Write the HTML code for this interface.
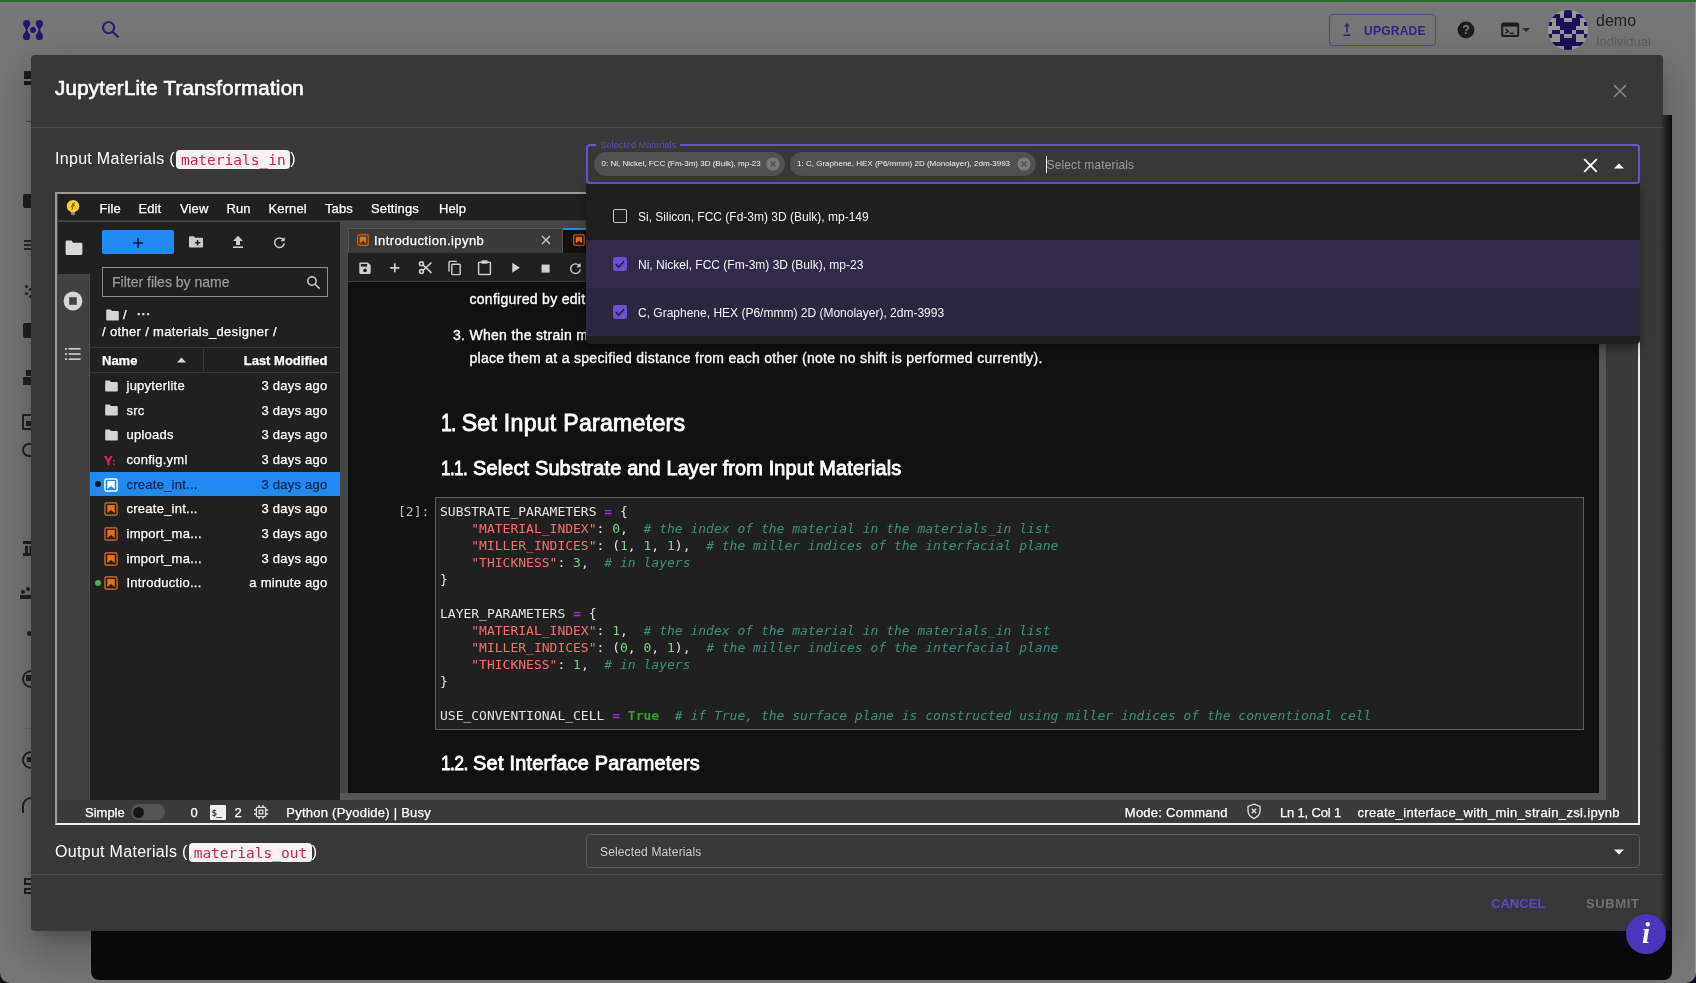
<!DOCTYPE html>
<html lang="en">
<head>
<meta charset="utf-8">
<title>JupyterLite Transformation</title>
<style>
*{box-sizing:border-box;margin:0;padding:0}
html,body{width:1696px;height:983px;overflow:hidden}
body{position:relative;background:#777777;font-family:"Liberation Sans",Arial,sans-serif;color:#fff;-webkit-font-smoothing:antialiased}
.abs{position:absolute}
svg{display:block}
/* ---------- page behind backdrop ---------- */
#greenline{left:0;top:0;width:1696px;height:2px;background:#2c6a2c}
#backpanel{left:91px;top:115px;width:1581px;height:865px;background:#0b0b0b;border-radius:0 0 8px 8px}
.bgico{position:absolute;color:#1b1b2b}
/* ---------- modal ---------- */
#modal{will-change:transform;left:31px;top:55px;width:1632px;height:876px;background:#383838;border-radius:4px;box-shadow:0 11px 15px -7px rgba(0,0,0,.2),0 24px 38px 3px rgba(0,0,0,.14),0 9px 46px 8px rgba(0,0,0,.12)}
#title{left:24px;top:21px;font-size:20.5px;font-weight:400;letter-spacing:.24px;-webkit-text-stroke:.65px #fff;line-height:24px;white-space:nowrap}
.hr{position:absolute;left:0;width:1632px;height:1px;background:#4e4e4e}
.rowlabel{position:absolute;left:24px;font-size:16px;line-height:20px;white-space:nowrap;color:#fff;letter-spacing:.3px}
.rowlabel code{font-family:"DejaVu Sans Mono","Liberation Mono",monospace;font-size:14.5px;letter-spacing:0;color:#c7254e;background:#f9f2f4;border-radius:4px;padding:1.5px 4.6px;margin-left:1.5px}

/* ---------- jupyterlite ---------- */
#jl{position:absolute;left:24px;top:137px;width:1585px;height:633px;border:2px solid;border-color:#9a9a9a #eeeeee #eeeeee #9a9a9a;background:#454545;overflow:hidden;font-size:13px;color:#fff}
#jli{position:absolute;left:1px;top:0;width:1580px;height:629px}
#jl .t{position:absolute;white-space:nowrap;line-height:16px;-webkit-text-stroke:.25px currentColor}
#jmenu{left:0;top:0;width:1580px;height:27px;background:#202020;border-bottom:1px solid #3c3c3c}
#jmenu .t{top:6.8px;font-size:13px;letter-spacing:.12px}
#jside{left:0;top:28px;width:32px;height:578px;background:#414141;border-right:1px solid #4c4c4c}
#jsideact{left:0;top:28px;width:32px;height:52px;background:#202020}
#jfb{left:32px;top:28px;width:250px;height:578px;background:#202020}
#jfb .row{position:absolute;left:0;width:250px;height:24.67px}
#jfb .row .t{top:5px;letter-spacing:.25px}
#jfb .row .n{left:36.5px}
#jfb .row .m{right:12.5px}
#jfb .ic{position:absolute;left:14.5px;top:6.2px}
.nbi{stroke:#e5700c;fill:#e5700c}

#jtabs .t{font-size:13px}
#jtool{left:290px;top:59.4px;width:1251px;height:28.3px;background:#202020;border-bottom:1px solid #3c3c3c}
#jtool svg{position:absolute}
#jnb{left:290px;top:88px;width:1251px;height:511px;background:#111111;overflow:hidden}
#jnb .md{position:absolute;white-space:nowrap;font-size:14px;line-height:22px;color:#fff;letter-spacing:.31px;-webkit-text-stroke:.35px #fff}
#jnb h2,#jnb h3{position:absolute;white-space:nowrap;font-weight:400;color:#fff;letter-spacing:0;-webkit-text-stroke:.85px #fff}
#jnb h2{font-size:23.1px;line-height:30px}
#jnb h3{font-size:19.9px;line-height:26px}
#cell{left:87.3px;top:214.6px;width:1149px;height:233.4px;background:#202020;border:1px solid #606060}
pre.code{position:absolute;left:3.7px;top:5.9px;font-family:"DejaVu Sans Mono","Liberation Mono",monospace;font-size:13px;line-height:17px;color:#e4e4e4;letter-spacing:0}
pre.code .s{color:#f2706e}
pre.code .o{color:#a826f7;font-weight:700}
pre.code .n{color:#7dd08a}
pre.code .c{color:#3c8f7f;font-style:italic}
pre.code .k{color:#2fa12f;font-weight:700}
#jstatus{left:0;top:606px;width:1580px;height:23px;background:#3a3a3a}
#jstatus .t{top:4.5px;font-size:13px}

/* ---------- MUI bits ---------- */
#ac{left:555px;top:88.6px;width:1054px;height:40.2px;border:2px solid #6a53c9;border-radius:4px;background:#383838}
#aclabel{left:565.4px;top:84.1px;padding:0 4px;background:#383838;font-size:9px;line-height:12px;color:#5f4eb4;white-space:nowrap;letter-spacing:.1px}
.chip{position:absolute;top:96.5px;height:24.5px;border-radius:12.25px;background:#515151;box-shadow:0 0 0 .5px rgba(0,0,0,.1)}
.chip span{position:absolute;left:7.6px;top:6.2px;font-size:8px;line-height:12px;color:#f2f2f2;white-space:nowrap}
.chip svg{position:absolute;top:5.5px}
#pop{left:555px;top:128.6px;width:1054px;height:160.4px;background:#1f1f1f;border-radius:0 0 4px 4px;box-shadow:0 5px 5px -3px rgba(0,0,0,.2),0 8px 10px 1px rgba(0,0,0,.14),0 3px 14px 2px rgba(0,0,0,.12)}
#pop .it{position:absolute;left:0;width:1054px;height:48px}
#pop .it span{position:absolute;left:52px;top:16.8px;font-size:12px;line-height:16px;color:#f4f4f4;white-space:nowrap}
#pop .cb{position:absolute;left:27px;top:17.4px;width:14px;height:14px;border-radius:2px}
#outsel{left:555px;top:779px;width:1054px;height:34px;border:1px solid #5c5c5c;border-radius:4px}
.btn{position:absolute;top:840.8px;font-size:13px;font-weight:700;line-height:16px;letter-spacing:.3px;white-space:nowrap}
</style>
</head>
<body>
<div id="greenline" class="abs"></div>
<div id="topbar" class="abs" style="left:0;top:0;width:1696px;height:55px;will-change:transform">
  <svg class="abs" style="left:22px;top:19px" width="22" height="22" viewBox="0 0 22 22" fill="#20196e"><circle cx="4.6" cy="4.6" r="3.6"/><circle cx="17.4" cy="4.6" r="3.6"/><circle cx="4.6" cy="17.4" r="3.6"/><circle cx="17.4" cy="17.4" r="3.6"/><circle cx="11" cy="11" r="2.9"/><path d="M2.2 7 L7 7 L5.3 11 L7 15 L2.2 15 L3.9 11 Z"/><path d="M15 7 L19.8 7 L18.1 11 L19.8 15 L15 15 L16.7 11 Z"/></svg>
  <svg class="abs" style="left:100px;top:19px" width="22" height="22" viewBox="0 0 22 22" fill="none" stroke="#262072" stroke-width="2.1"><circle cx="8.6" cy="8.6" r="5.6"/><path d="M12.8 12.8 L18.6 18.6" stroke-linecap="butt"/></svg>
  <div class="abs" style="left:1329px;top:14px;width:106.5px;height:32px;border:1px solid #4f4a93;border-radius:4px"></div>
  <svg class="abs" style="left:1340px;top:22px" width="14" height="16" viewBox="0 0 14 16" fill="#2c2680"><path d="M7 1 L10 4.4 H7.8 V10.6 H6.2 V4.4 H4 Z"/><rect x="3.6" y="12.4" width="6.8" height="1.6"/></svg>
  <div class="abs" style="left:1364px;top:23px;font-size:12px;font-weight:700;letter-spacing:.25px;color:#2c2680;line-height:16px;white-space:nowrap" id="upg">UPGRADE</div>
  <svg class="abs" style="left:1456px;top:20px" width="20" height="20" viewBox="0 0 20 20"><circle cx="10" cy="10" r="8.4" fill="#1c1c1c"/><text x="10" y="14.3" text-anchor="middle" font-family="Liberation Sans, Arial, sans-serif" font-weight="700" font-size="12.5" fill="#7d7d7d">?</text></svg>
  <svg class="abs" style="left:1501px;top:22px" width="32" height="16" viewBox="0 0 32 16"><rect x="1.2" y="1.6" width="16" height="12.4" rx="1.6" fill="none" stroke="#1d1d1d" stroke-width="2"/><rect x="1.2" y="1.6" width="16" height="3" fill="#1d1d1d"/><path d="M4.6 7 L7.2 9.2 L4.6 11.4" fill="none" stroke="#1d1d1d" stroke-width="1.5"/><rect x="8.6" y="10.6" width="4.6" height="1.4" fill="#1d1d1d"/><path d="M21.2 6 H29 L25.1 10 Z" fill="#2a2a2a"/></svg>
  <svg class="abs" style="left:1548px;top:10px" width="40" height="40" viewBox="0 0 40 40"><defs><clipPath id="avc"><circle cx="20" cy="20" r="20"/></clipPath></defs><g clip-path="url(#avc)"><rect width="40" height="40" fill="#9a9a98"/><g fill="#1d1058"><rect x="16" y="0" width="8" height="4"/><rect x="4" y="4" width="8" height="4"/><rect x="16" y="4" width="8" height="4"/><rect x="28" y="4" width="8" height="4"/><rect x="8" y="8" width="8" height="4"/><rect x="24" y="8" width="8" height="4"/><rect x="0" y="12" width="4" height="4"/><rect x="8" y="12" width="24" height="4"/><rect x="36" y="12" width="4" height="4"/><rect x="12" y="16" width="16" height="4"/><rect x="4" y="20" width="8" height="4"/><rect x="16" y="20" width="8" height="4"/><rect x="28" y="20" width="8" height="4"/><rect x="0" y="24" width="4" height="4"/><rect x="12" y="24" width="4" height="4"/><rect x="24" y="24" width="4" height="4"/><rect x="36" y="24" width="4" height="4"/><rect x="12" y="28" width="16" height="4"/><rect x="4" y="32" width="32" height="4"/><rect x="16" y="36" width="8" height="4"/></g></g></svg>
  <div class="abs" id="demo" style="left:1596px;top:11px;font-size:16px;line-height:20px;color:#202020;white-space:nowrap">demo</div>
  <div class="abs" id="indiv" style="left:1596px;top:34px;font-size:13px;line-height:16px;color:#5e5e5e;white-space:nowrap">Individual</div>
</div>
<div id="pageside">
  <div class="abs" style="left:23.6px;top:70.8px;width:9px;height:8px;background:#1c1c1e"></div>
  <div class="abs" style="left:23.6px;top:81.2px;width:9px;height:4px;background:#1c1c1e"></div>
  <div class="abs" style="left:26px;top:120.5px;width:6px;height:1.5px;background:#4a4a4a"></div>
  <div class="abs" style="left:23px;top:194px;width:9px;height:14px;border-radius:2px 0 0 2px;background:#202022"></div>
  <div class="abs" style="left:24px;top:240px;width:8px;height:2px;background:#2a2a2c;box-shadow:0 4px 0 #2a2a2c,0 8px 0 #2a2a2c"></div>
  <div class="abs" style="left:25px;top:285px;width:3px;height:3px;border-radius:2px;background:#26262a;box-shadow:4px 3px 0 #26262a,0 7px 0 #26262a,4px 10px 0 #26262a"></div>
  <div class="abs" style="left:23px;top:323px;width:9px;height:15px;border-radius:2px 0 0 2px;background:#202022"></div>
  <div class="abs" style="left:26px;top:370px;width:6px;height:6px;background:#222226"></div>
  <div class="abs" style="left:23px;top:377px;width:9px;height:8px;background:#222226"></div>
  <div class="abs" style="left:21.5px;top:414px;width:11px;height:16px;border:2px solid #222226;border-right:none;border-radius:2px 0 0 2px"></div>
  <div class="abs" style="left:26px;top:421px;width:6px;height:5px;background:#222226"></div>
  <div class="abs" style="left:21.5px;top:443px;width:11px;height:14px;border:2px solid #222226;border-right:none;border-radius:7px 0 0 7px"></div>
  <div class="abs" style="left:23px;top:541px;width:9px;height:3px;background:#222226;box-shadow:0 12px 0 #222226"></div>
  <div class="abs" style="left:25px;top:546px;width:2.5px;height:8px;background:#222226;box-shadow:4.5px 0 0 #222226"></div>
  <div class="abs" style="left:21px;top:590px;width:4px;height:4px;border-radius:2px;background:#222226;box-shadow:5px -3px 0 #222226"></div>
  <div class="abs" style="left:20px;top:595px;width:12px;height:4px;background:#222226"></div>
  <div class="abs" style="left:27px;top:631px;width:5px;height:5px;border-radius:3px;background:#222226"></div>
  <div class="abs" style="left:22px;top:670px;width:18px;height:18px;border:2.5px solid #222226;border-radius:9px"></div>
  <div class="abs" style="left:26px;top:675px;width:6px;height:6px;background:#222226"></div>
  <div class="abs" style="left:24px;top:728px;width:8px;height:1px;background:#6a6a6a"></div>
  <div class="abs" style="left:22px;top:751px;width:18px;height:18px;border:2.5px solid #222226;border-radius:9px"></div>
  <div class="abs" style="left:27px;top:757px;width:5px;height:5px;background:#222226"></div>
  <div class="abs" style="left:22px;top:797px;width:18px;height:16px;border:2.5px solid #222226;border-bottom:none;border-radius:9px 9px 0 0"></div>
  <div class="abs" style="left:23.5px;top:878px;width:8.5px;height:6.5px;border:2px solid #222226;border-right:none"></div>
  <div class="abs" style="left:23.5px;top:887.5px;width:8.5px;height:6.5px;border:2px solid #222226;border-right:none"></div>
</div>
<div id="backpanel" class="abs"></div>

<div id="modal" class="abs">
  <div class="abs" style="left:1629px;top:60px;width:12px;height:816px;background:linear-gradient(to right,rgba(56,56,56,1) 0%,rgba(40,40,40,1) 35%,rgba(12,12,12,1) 100%)"></div>
  <div id="title" class="abs">JupyterLite Transformation</div>
  <div class="hr" style="top:72px"></div>
  <div class="rowlabel" id="inlab" style="top:94px">Input Materials (<code>materials_in</code>)</div>
  <div id="jl"><div id="jli">
  <div id="jmenu" class="abs">
    <svg class="abs" style="left:7px;top:5px" width="16" height="18" viewBox="0 0 16 18"><path d="M6 12.6 H10 V15.2 Q10 16.2 8 16.2 Q6 16.2 6 15.2 Z" fill="#8a8a8a"/><circle cx="8" cy="7.2" r="6.2" fill="#f7d31e"/><path d="M9.6 3.4 L6.2 8.2 M7.2 4.6 L9.8 6.6 M8.4 6.2 L7 10.6" stroke="#5a4a00" stroke-width="1" fill="none"/></svg>
    <div class="t" style="left:41.5px">File</div><div class="t" style="left:80.4px">Edit</div><div class="t" style="left:122px">View</div><div class="t" style="left:168.5px">Run</div><div class="t" style="left:210.5px">Kernel</div><div class="t" style="left:267px">Tabs</div><div class="t" style="left:313px">Settings</div><div class="t" style="left:381px">Help</div>
  </div>
  <div id="jside" class="abs"></div>
  <div id="jsideact" class="abs"></div>
  <svg class="abs" style="left:6px;top:45px" width="20" height="18" viewBox="0 0 20 18"><path d="M1.6 3 Q1.6 1.6 3 1.6 H7.4 L9.2 3.8 H17 Q18.4 3.8 18.4 5.2 V14.6 Q18.4 16 17 16 H3 Q1.6 16 1.6 14.6 Z" fill="#d8d8d8"/></svg>
  <svg class="abs" style="left:5px;top:97px" width="20" height="20" viewBox="0 0 20 20"><circle cx="10" cy="10" r="9.4" fill="#d6d6d6"/><rect x="6.2" y="6.2" width="7.6" height="7.6" fill="#414141"/></svg>
  <svg class="abs" style="left:7px;top:153px" width="16" height="14" viewBox="0 0 16 14" fill="#cfcfcf"><rect x="0" y="1" width="2" height="1.6"/><rect x="3.6" y="1" width="12" height="1.6"/><rect x="0" y="6.2" width="2" height="1.6"/><rect x="3.6" y="6.2" width="12" height="1.6"/><rect x="0" y="11.4" width="2" height="1.6"/><rect x="3.6" y="11.4" width="12" height="1.6"/></svg>

  <div id="jfb" class="abs">
    <div class="abs" style="left:12px;top:8px;width:72px;height:24px;border-radius:2px;background:#1f8af4"></div>
    <svg class="abs" style="left:41px;top:14px" width="14" height="14" viewBox="0 0 14 14"><path d="M7 2 V12 M2 7 H12" stroke="#101a28" stroke-width="1.7"/></svg>
    <svg class="abs" style="left:98px;top:13px" width="16" height="14" viewBox="0 0 16 14"><path d="M1 2.2 Q1 1.2 2 1.2 H5.8 L7.2 2.8 H14 Q15 2.8 15 3.8 V11.6 Q15 12.6 14 12.6 H2 Q1 12.6 1 11.6 Z" fill="#cdcdcd"/><path d="M9.6 5 V10.4 M6.9 7.7 H12.3" stroke="#202020" stroke-width="1.5"/></svg>
    <svg class="abs" style="left:141px;top:13px" width="14" height="14" viewBox="0 0 14 14" fill="#cdcdcd"><path d="M7 .8 L12 6 H9 V10 H5 V6 H2 Z"/><rect x="2" y="11.4" width="10" height="1.6"/></svg>
    <svg class="abs" style="left:183px;top:14px" width="13" height="13" viewBox="0 0 13 13"><path d="M10.6 4.2 A4.8 4.8 0 1 0 11.3 7.4" fill="none" stroke="#cdcdcd" stroke-width="1.5"/><path d="M11.6 1 V5.2 H7.4 Z" fill="#cdcdcd"/></svg>
    <div class="abs" style="left:12px;top:45px;width:226px;height:30px;border:1px solid #8c8c8c;background:#202020"></div>
    <div class="t" id="filt" style="left:22px;top:51px;font-size:14px;line-height:18px;color:#9a9a9a">Filter files by name</div>
    <svg class="abs" style="left:216px;top:53px" width="15" height="15" viewBox="0 0 15 15" fill="none" stroke="#d0d0d0" stroke-width="1.5"><circle cx="6" cy="6" r="4.2"/><path d="M9.2 9.2 L13.6 13.6"/></svg>
    <svg class="abs" style="left:15px;top:86.3px" width="15" height="14" viewBox="0 0 15 14"><path d="M1.2 2.4 Q1.2 1.4 2.2 1.4 H5.6 L7 3 H12.8 Q13.8 3 13.8 4 V11.4 Q13.8 12.4 12.8 12.4 H2.2 Q1.2 12.4 1.2 11.4 Z" fill="#d4d4d4"/></svg>
    <div class="t" style="left:33px;top:85px">/</div>
    <div class="t" style="left:47px;top:81px;letter-spacing:1px;font-weight:700;color:#d8d8d8">...</div>
    <div class="t" id="crumb" style="left:12px;top:102px;letter-spacing:.34px">/ other / materials_designer /</div>
    <div class="abs" style="left:0;top:125px;width:250px;height:26px;border-top:1px solid #3a3a3a;border-bottom:1px solid #3a3a3a"></div>
    <div class="abs" style="left:113px;top:126px;width:1px;height:24px;background:#3a3a3a"></div>
    <div class="t" style="left:12px;top:130.8px;font-weight:700">Name</div>
    <svg class="abs" style="left:87px;top:135px" width="9" height="6" viewBox="0 0 9 6"><path d="M0 5.4 L4.5 .6 L9 5.4 Z" fill="#d8d8d8"/></svg>
    <div class="t" style="right:12.5px;top:130.8px;font-weight:700">Last Modified</div>
<div class="row" style="top:151.10px;"><svg class="ic" width="15" height="14" viewBox="0 0 15 14" style="left:14px;top:5.6px"><path d="M1.2 2.4 Q1.2 1.4 2.2 1.4 H5.6 L7 3 H12.8 Q13.8 3 13.8 4 V11.4 Q13.8 12.4 12.8 12.4 H2.2 Q1.2 12.4 1.2 11.4 Z" fill="#d4d4d4"/></svg><div class="t n" style="">jupyterlite</div><div class="t m" style="">3 days ago</div></div>
<div class="row" style="top:175.77px;"><svg class="ic" width="15" height="14" viewBox="0 0 15 14" style="left:14px;top:5.6px"><path d="M1.2 2.4 Q1.2 1.4 2.2 1.4 H5.6 L7 3 H12.8 Q13.8 3 13.8 4 V11.4 Q13.8 12.4 12.8 12.4 H2.2 Q1.2 12.4 1.2 11.4 Z" fill="#d4d4d4"/></svg><div class="t n" style="">src</div><div class="t m" style="">3 days ago</div></div>
<div class="row" style="top:200.44px;"><svg class="ic" width="15" height="14" viewBox="0 0 15 14" style="left:14px;top:5.6px"><path d="M1.2 2.4 Q1.2 1.4 2.2 1.4 H5.6 L7 3 H12.8 Q13.8 3 13.8 4 V11.4 Q13.8 12.4 12.8 12.4 H2.2 Q1.2 12.4 1.2 11.4 Z" fill="#d4d4d4"/></svg><div class="t n" style="">uploads</div><div class="t m" style="">3 days ago</div></div>
<div class="row" style="top:225.11px;"><div class="t" style="left:14px;top:5.4px;font-weight:700;font-size:13px;color:#e0245e;letter-spacing:-.5px">Y<span style="font-size:9px;position:relative;top:0px">:</span></div><div class="t n" style="">config.yml</div><div class="t m" style="">3 days ago</div></div>
<div class="row" style="top:249.78px;background:#1f8af4;"><div class="abs" style="left:4.5px;top:9.3px;width:6px;height:6px;border-radius:3px;background:#101820"></div><svg class="ic" width="14" height="14" viewBox="0 0 15 15" style="left:14px;top:5.8px"><rect x="1" y="1" width="13" height="13" rx="1.6" fill="none" stroke="#ffffff" stroke-width="1.5"/><path d="M3.5 3.3 H11.5 V11.9 L7.5 8.5 L3.5 11.9 Z" fill="#ffffff"/></svg><div class="t n" style="color:#0a2446;">create_int...</div><div class="t m" style="color:#0a2446;">3 days ago</div></div>
<div class="row" style="top:274.45px;"><svg class="ic" width="14" height="14" viewBox="0 0 15 15" style="left:14px;top:5.8px"><rect x="1" y="1" width="13" height="13" rx="1.4" fill="none" stroke="#e5700c" stroke-width="1.3"/><path d="M3.5 3.3 H11.5 V11.9 L7.5 8.5 L3.5 11.9 Z" fill="#e5700c"/></svg><div class="t n" style="">create_int...</div><div class="t m" style="">3 days ago</div></div>
<div class="row" style="top:299.12px;"><svg class="ic" width="14" height="14" viewBox="0 0 15 15" style="left:14px;top:5.8px"><rect x="1" y="1" width="13" height="13" rx="1.4" fill="none" stroke="#e5700c" stroke-width="1.3"/><path d="M3.5 3.3 H11.5 V11.9 L7.5 8.5 L3.5 11.9 Z" fill="#e5700c"/></svg><div class="t n" style="">import_ma...</div><div class="t m" style="">3 days ago</div></div>
<div class="row" style="top:323.79px;"><svg class="ic" width="14" height="14" viewBox="0 0 15 15" style="left:14px;top:5.8px"><rect x="1" y="1" width="13" height="13" rx="1.4" fill="none" stroke="#e5700c" stroke-width="1.3"/><path d="M3.5 3.3 H11.5 V11.9 L7.5 8.5 L3.5 11.9 Z" fill="#e5700c"/></svg><div class="t n" style="">import_ma...</div><div class="t m" style="">3 days ago</div></div>
<div class="row" style="top:348.46px;"><div class="abs" style="left:4.5px;top:9.3px;width:6px;height:6px;border-radius:3px;background:#4caf50"></div><svg class="ic" width="14" height="14" viewBox="0 0 15 15" style="left:14px;top:5.8px"><rect x="1" y="1" width="13" height="13" rx="1.4" fill="none" stroke="#e5700c" stroke-width="1.3"/><path d="M3.5 3.3 H11.5 V11.9 L7.5 8.5 L3.5 11.9 Z" fill="#e5700c"/></svg><div class="t n" style="">Introductio...</div><div class="t m" style="">a minute ago</div></div>

  </div>
  <div id="jmain">
  <div id="jtabs">
    <div class="abs" style="left:290px;top:34px;width:215px;height:25px;background:#3a3a3a;border:1px solid #555;border-bottom:none"></div>
    <svg class="abs" style="left:299px;top:40.4px" width="12" height="12" viewBox="0 0 15 15"><rect x="1" y="1" width="13" height="13" rx="1.4" fill="none" stroke="#e5700c" stroke-width="1.3"/><path d="M3.5 3.3 H11.5 V11.9 L7.5 8.5 L3.5 11.9 Z" fill="#e5700c"/></svg>
    <div class="t" id="tab1" style="left:316px;top:38.5px;letter-spacing:.42px">Introduction.ipynb</div>
    <svg class="abs" style="left:483px;top:41px" width="10" height="10" viewBox="0 0 10 10"><path d="M1 1 L9 9 M9 1 L1 9" stroke="#d0d0d0" stroke-width="1.3"/></svg>
    <div class="abs" style="left:505px;top:34px;width:400px;height:25px;background:#111;border-top:2px solid #1f8af4"></div>
    <svg class="abs" style="left:515px;top:40.4px" width="12" height="12" viewBox="0 0 15 15"><rect x="1" y="1" width="13" height="13" rx="1.4" fill="none" stroke="#e5700c" stroke-width="1.3"/><path d="M3.5 3.3 H11.5 V11.9 L7.5 8.5 L3.5 11.9 Z" fill="#e5700c"/></svg>
    <div class="t" style="left:532px;top:38.5px">create_interface_with_min_strain_zsl.ipynb</div>
  </div>
  <div id="jtool" class="abs">
    <svg style="left:10.2px;top:7.6px" width="14" height="14.4" viewBox="0 0 15 15"><path d="M1.4 2.6 Q1.4 1.4 2.6 1.4 H10.6 L13.6 4.4 V12.4 Q13.6 13.6 12.4 13.6 H2.6 Q1.4 13.6 1.4 12.4 Z" fill="#cfcfcf"/><rect x="3" y="3" width="6.8" height="2.8" fill="#202020"/><circle cx="7.5" cy="9.8" r="2" fill="#202020"/></svg>
    <svg style="left:41.4px;top:8.8px" width="11.6" height="11.6" viewBox="0 0 13 13"><path d="M6.5 1.4 V11.6 M1.4 6.5 H11.6" stroke="#cfcfcf" stroke-width="1.9"/></svg>
    <svg style="left:70px;top:6.4px" width="15.4" height="15.4" viewBox="0 0 16 16" fill="none" stroke="#cfcfcf" stroke-width="1.7"><circle cx="3.6" cy="4" r="2"/><circle cx="3.6" cy="12" r="2"/><path d="M5.2 5.2 L14 13.4 M5.2 10.8 L14 2.6"/></svg>
    <svg style="left:99px;top:6.6px" width="15" height="16" viewBox="0 0 15 16" fill="none" stroke="#cfcfcf" stroke-width="1.4"><path d="M2 11.6 V2.2 Q2 1.4 2.8 1.4 H9.8"/><rect x="4.8" y="4.2" width="8.4" height="10.4" rx=".8"/></svg>
    <svg style="left:129px;top:5.6px" width="15" height="17" viewBox="0 0 15 17"><rect x="1.6" y="3.2" width="11.8" height="12.2" rx=".8" fill="none" stroke="#cfcfcf" stroke-width="1.5"/><rect x="4.4" y="1.2" width="6.2" height="3.6" rx=".8" fill="#cfcfcf"/></svg>
    <svg style="left:163.4px;top:8.9px" width="9.8" height="11.6" viewBox="0 0 11 13"><path d="M1.4 .8 L10 6.5 L1.4 12.2 Z" fill="#cfcfcf"/></svg>
    <svg style="left:193px;top:10.6px" width="9.2" height="9.2" viewBox="0 0 10 10"><rect x=".6" y=".6" width="8.8" height="8.8" fill="#cfcfcf"/></svg>
    <svg style="left:221px;top:8.4px" width="13" height="13" viewBox="0 0 14 14"><path d="M11.4 4.4 A5.2 5.2 0 1 0 12.2 7.8" fill="none" stroke="#cfcfcf" stroke-width="1.5"/><path d="M12.6 .8 V5.6 H7.8 Z" fill="#cfcfcf"/></svg>
  </div>
  <div id="jnb" class="abs">
    <div class="md" id="md1" style="left:121.4px;top:6px">configured by editing the cells below.</div>
    <div class="md" style="left:105px;top:42.3px">3.</div>
    <div class="md" id="md2" style="left:121.4px;top:42.3px">When the strain matching is finished, the interface with the lowest strain is selected. We create the corresponding supercells and</div>
    <div class="md" id="md3" style="left:121.4px;top:65.3px">place them at a specified distance from each other (note no shift is performed currently).</div>
    <h2 id="h2a" style="left:93.4px;top:126px;letter-spacing:.27px"><span style="letter-spacing:-.8px;word-spacing:-3px;display:inline-block;white-space:pre;transform:scaleX(.84);transform-origin:0 50%">1. </span>Set Input Parameters</h2>
    <h3 id="h3a" style="left:93.4px;top:173px;letter-spacing:.15px"><span style="letter-spacing:-.72px;word-spacing:-3.4px;display:inline-block;white-space:pre;transform:scaleX(.86);transform-origin:0 50%">1.1. </span>Select Substrate and Layer from Input Materials</h3>
    <div class="abs" id="prompt" style="left:50px;top:220.5px;font-family:'DejaVu Sans Mono','Liberation Mono',monospace;font-size:13px;line-height:17px;color:#bdbdbd;white-space:nowrap">[2]:</div>
    <div id="cell" class="abs"><pre class="code" id="code">SUBSTRATE_PARAMETERS <span class="o">=</span> {
    <span class="s">"MATERIAL_INDEX"</span>: <span class="n">0</span>,  <span class="c"># the index of the material in the materials_in list</span>
    <span class="s">"MILLER_INDICES"</span>: (<span class="n">1</span>, <span class="n">1</span>, <span class="n">1</span>),  <span class="c"># the miller indices of the interfacial plane</span>
    <span class="s">"THICKNESS"</span>: <span class="n">3</span>,  <span class="c"># in layers</span>
}

LAYER_PARAMETERS <span class="o">=</span> {
    <span class="s">"MATERIAL_INDEX"</span>: <span class="n">1</span>,  <span class="c"># the index of the material in the materials_in list</span>
    <span class="s">"MILLER_INDICES"</span>: (<span class="n">0</span>, <span class="n">0</span>, <span class="n">1</span>),  <span class="c"># the miller indices of the interfacial plane</span>
    <span class="s">"THICKNESS"</span>: <span class="n">1</span>,  <span class="c"># in layers</span>
}

USE_CONVENTIONAL_CELL <span class="o">=</span> <span class="k">True</span>  <span class="c"># if True, the surface plane is constructed using miller indices of the conventional cell</span></pre></div>
    <h3 id="h3b" style="left:93.4px;top:468px;letter-spacing:.24px"><span style="letter-spacing:-.72px;word-spacing:-3.4px;display:inline-block;white-space:pre;transform:scaleX(.88);transform-origin:0 50%">1.2. </span>Set Interface Parameters</h3>
  </div>
  <div class="abs" style="left:1541px;top:88px;width:7px;height:518px;background:#565656"></div>
  <div class="abs" style="left:282px;top:599px;width:1266px;height:7px;background:#565656"></div>
  <div class="abs" style="left:1548px;top:28px;width:32px;height:578px;background:#3b3b3b"></div>
</div>
  <div id="jstatus" class="abs">
    <div class="t" id="st1" style="left:27px">Simple</div>
    <div class="abs" style="left:72.5px;top:4px;width:34px;height:16px;border-radius:8px;background:#555"></div>
    <div class="abs" style="left:75px;top:6.5px;width:11px;height:11px;border-radius:6px;background:#171717"></div>
    <div class="t" style="left:132.5px">0</div>
    <div class="abs" style="left:152px;top:5px;width:15.5px;height:15px;background:#f0f0f0;border-radius:1px"></div>
    <div class="abs" style="left:153.5px;top:7px;font-size:9.5px;line-height:12px;font-weight:700;color:#3a3a3a;font-family:'DejaVu Sans Mono','Liberation Mono',monospace;letter-spacing:-1px;white-space:nowrap">$_</div>
    <div class="t" style="left:176.5px">2</div>
    <svg class="abs" style="left:195px;top:4px" width="16" height="16" viewBox="0 0 16 16" fill="none" stroke="#e0e0e0" stroke-width="1.3"><rect x="3.4" y="3.4" width="9.2" height="9.2" rx="1.2"/><rect x="6.2" y="6.2" width="3.6" height="3.6"/><path d="M6 1 V3.4 M10 1 V3.4 M6 12.6 V15 M10 12.6 V15 M1 6 H3.4 M1 10 H3.4 M12.6 6 H15 M12.6 10 H15"/></svg>
    <div class="t" id="st2" style="left:228.3px;letter-spacing:.24px">Python (Pyodide) | Busy</div>
    <div class="t" id="st3" style="left:1066.8px;letter-spacing:.25px">Mode: Command</div>
    <svg class="abs" style="left:1188px;top:3px" width="16" height="17" viewBox="0 0 16 17" fill="none" stroke="#e0e0e0" stroke-width="1.3"><path d="M8 1.2 L14 3.4 V8 Q14 12.8 8 15.6 Q2 12.8 2 8 V3.4 Z"/><path d="M5.8 5.8 L10.2 10.2 M10.2 5.8 L5.8 10.2"/></svg>
    <div class="t" id="st4" style="left:1222px;letter-spacing:-.17px">Ln 1, Col 1</div>
    <div class="t" id="st5" style="left:1299.5px;letter-spacing:.33px">create_interface_with_min_strain_zsl.ipynb</div>
  </div>
</div></div>
  <div class="rowlabel" id="outlab" style="top:787px">Output Materials (<code>materials_out</code>)</div>
  <div class="hr" style="top:819px"></div>

  <div id="ac" class="abs"></div>
  <div id="aclabel" class="abs">Selected Materials</div>
  <div class="chip" style="left:563px;width:190.5px"><span id="chip1">0: Ni, Nickel, FCC (Fm-3m) 3D (Bulk), mp-23</span><svg style="left:172px" width="14" height="14" viewBox="0 0 14 14"><circle cx="7" cy="7" r="6.6" fill="#7a7a7a"/><path d="M4.6 4.6 L9.4 9.4 M9.4 4.6 L4.6 9.4" stroke="#515151" stroke-width="1.4"/></svg></div>
  <div class="chip" style="left:758.5px;width:246.5px"><span id="chip2">1: C, Graphene, HEX (P6/mmm) 2D (Monolayer), 2dm-3993</span><svg style="left:227.5px" width="14" height="14" viewBox="0 0 14 14"><circle cx="7" cy="7" r="6.6" fill="#7a7a7a"/><path d="M4.6 4.6 L9.4 9.4 M9.4 4.6 L4.6 9.4" stroke="#515151" stroke-width="1.4"/></svg></div>
  <div class="abs" style="left:1015px;top:100.5px;width:1px;height:17px;background:#fff"></div>
  <div class="abs" id="ph" style="left:1015.5px;top:102px;font-size:12px;line-height:16px;color:#9c9c9c;white-space:nowrap;letter-spacing:.15px">Select materials</div>
  <svg class="abs" style="left:1552px;top:102.5px" width="15" height="15" viewBox="0 0 15 15"><path d="M1.2 1.2 L13.8 13.8 M13.8 1.2 L1.2 13.8" stroke="#fff" stroke-width="1.9"/></svg>
  <svg class="abs" style="left:1583px;top:108px" width="10" height="6" viewBox="0 0 10 6"><path d="M0 5.6 L5 .4 L10 5.6 Z" fill="#fff"/></svg>
  <div id="pop" class="abs">
    <div class="it" style="top:8.4px"><div class="cb" style="border:1.8px solid #c4c4c4"></div><span id="it1">Si, Silicon, FCC (Fd-3m) 3D (Bulk), mp-149</span></div>
    <div class="it" style="top:56.4px;background:#312a49"><svg class="cb" style="background:#6a50d6" viewBox="0 0 14 14"><path d="M2.8 7.2 L5.7 10 L11.2 4.2" fill="none" stroke="#26213c" stroke-width="1.6"/></svg><span id="it2">Ni, Nickel, FCC (Fm-3m) 3D (Bulk), mp-23</span></div>
    <div class="it" style="top:104.4px;background:#2b273e"><svg class="cb" style="background:#6a50d6" viewBox="0 0 14 14"><path d="M2.8 7.2 L5.7 10 L11.2 4.2" fill="none" stroke="#26213c" stroke-width="1.6"/></svg><span id="it3">C, Graphene, HEX (P6/mmm) 2D (Monolayer), 2dm-3993</span></div>
  </div>
  <svg class="abs" style="left:1582px;top:29px" width="14" height="14" viewBox="0 0 14 14"><path d="M1 1 L13 13 M13 1 L1 13" stroke="#8c8c8c" stroke-width="1.5"/></svg>
  <div id="outsel" class="abs"></div>
  <div class="abs" id="outtxt" style="left:569px;top:788.8px;font-size:12px;line-height:16px;color:#cfcfcf;white-space:nowrap;letter-spacing:.15px">Selected Materials</div>
  <svg class="abs" style="left:1583px;top:794px" width="10" height="6" viewBox="0 0 10 6"><path d="M0 .4 L5 5.6 L10 .4 Z" fill="#fff"/></svg>
  <div class="btn" id="cancel" style="left:1460px;color:#5d4ac4;letter-spacing:.02px">CANCEL</div>
  <div class="btn" id="submit" style="left:1555px;color:#707070;letter-spacing:.62px">SUBMIT</div>
</div>
<div class="abs" id="fab" style="left:1626px;top:914px;width:40px;height:40px;border-radius:20px;background:#4b36bb;box-shadow:0 2px 4px rgba(0,0,0,.3)"></div>
<div class="abs" style="will-change:transform;left:1626px;top:914px;width:40px;height:40px;text-align:center;font-family:'Liberation Serif','DejaVu Serif',serif;font-style:italic;font-weight:700;font-size:29px;line-height:39px;color:#fff">i</div>
<div class="abs" style="left:1695px;top:2px;width:1px;height:981px;background:#969696"></div>
<div class="abs" style="left:1686px;top:973px;width:10px;height:10px;background:radial-gradient(circle at 0 0,rgba(10,8,32,0) 9.2px,#0a0820 10.4px)"></div>
<div class="abs" style="left:0;top:973px;width:10px;height:10px;background:radial-gradient(circle at 100% 0,rgba(16,16,16,0) 9.2px,#141414 10.4px)"></div>
</body>
</html>
